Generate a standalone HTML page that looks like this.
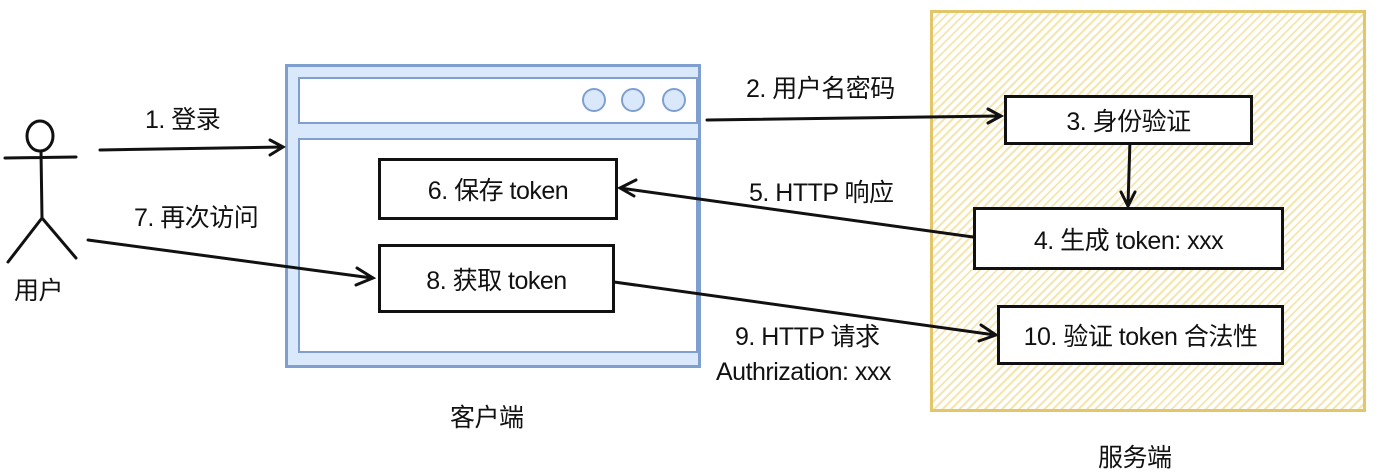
<!DOCTYPE html>
<html><head><meta charset="utf-8"><style>
body{margin:0;width:1376px;height:476px;background:#fff;overflow:hidden;position:relative;font-family:"Liberation Sans","Noto Sans CJK SC",sans-serif;}
.t{position:absolute;font-size:25px;color:#111;white-space:nowrap;line-height:1;letter-spacing:-0.5px}
.box{position:absolute;border:3px solid #111;background:#fff;display:flex;align-items:center;justify-content:center;font-size:25px;color:#111;box-sizing:border-box;letter-spacing:-0.5px;white-space:nowrap}
</style></head><body>
<div style="position:absolute;left:930px;top:10px;width:436px;height:402px;box-sizing:border-box;border:3px solid #e3c669;background:repeating-linear-gradient(135deg,#fff 0 4px,#f5e6b0 4px 6px)"></div>
<div style="position:absolute;left:285px;top:64px;width:416px;height:304px;box-sizing:border-box;border:3px solid #7e9fd0;background:#dae8fc"></div>
<div style="position:absolute;left:298px;top:77px;width:400px;height:47px;box-sizing:border-box;border:2.5px solid #7e9fd0;background:#fff"></div>
<div style="position:absolute;left:298px;top:138px;width:400px;height:215px;box-sizing:border-box;border:2.5px solid #7e9fd0;background:#fff"></div>
<svg width="1376" height="476" style="position:absolute;left:0;top:0">
<g fill="#dae8fc" stroke="#7e9fd0" stroke-width="2"><circle cx="594" cy="100" r="11"/><circle cx="633" cy="100" r="11"/><circle cx="674" cy="100" r="11"/></g>
<g stroke="#111" stroke-width="3" fill="none" stroke-linecap="round">
<ellipse cx="40" cy="136" rx="13" ry="15"/>
<path d="M41 151 L42 218 M5 158 L76 157 M42 218 L8 262 M42 218 L76 258"/>
<path d="M100 150 L282 147 M270 140 L283 147 L270 155"/>
<path d="M88 240 L372 278 M357 268 L373 278 L356 285"/>
<path d="M707 120 L1000 116 M988 109 L1001 116 L988 123"/>
<path d="M1130 140 L1128 205 M1121 192 L1128 206 L1135 192"/>
<path d="M973 237 L620 188 M636 180 L620 188 L634 196"/>
<path d="M614 282 L995 335 M981 325 L996 335 L979 341"/>
</g></svg>
<div class="box" style="left:378px;top:158px;width:240px;height:62px">6. 保存 token</div>
<div class="box" style="left:378px;top:244px;width:237px;height:69px">8. 获取 token</div>
<div class="box" style="left:1004px;top:95px;width:249px;height:50px">3. 身份验证</div>
<div class="box" style="left:973px;top:207px;width:311px;height:63px">4. 生成 token: xxx</div>
<div class="box" style="left:997px;top:305px;width:287px;height:60px">10. 验证 token 合法性</div>
<div class="t" style="left:145px;top:108px">1. 登录</div>
<div class="t" style="left:134px;top:206px">7. 再次访问</div>
<div class="t" style="left:14px;top:279px">用户</div>
<div class="t" style="left:746px;top:77px">2. 用户名密码</div>
<div class="t" style="left:749px;top:181px">5. HTTP 响应</div>
<div class="t" style="left:735px;top:325px">9. HTTP 请求</div>
<div class="t" style="left:716px;top:360px">Authrization: xxx</div>
<div class="t" style="left:450px;top:406px">客户端</div>
<div class="t" style="left:1098px;top:446px">服务端</div>
</body></html>
